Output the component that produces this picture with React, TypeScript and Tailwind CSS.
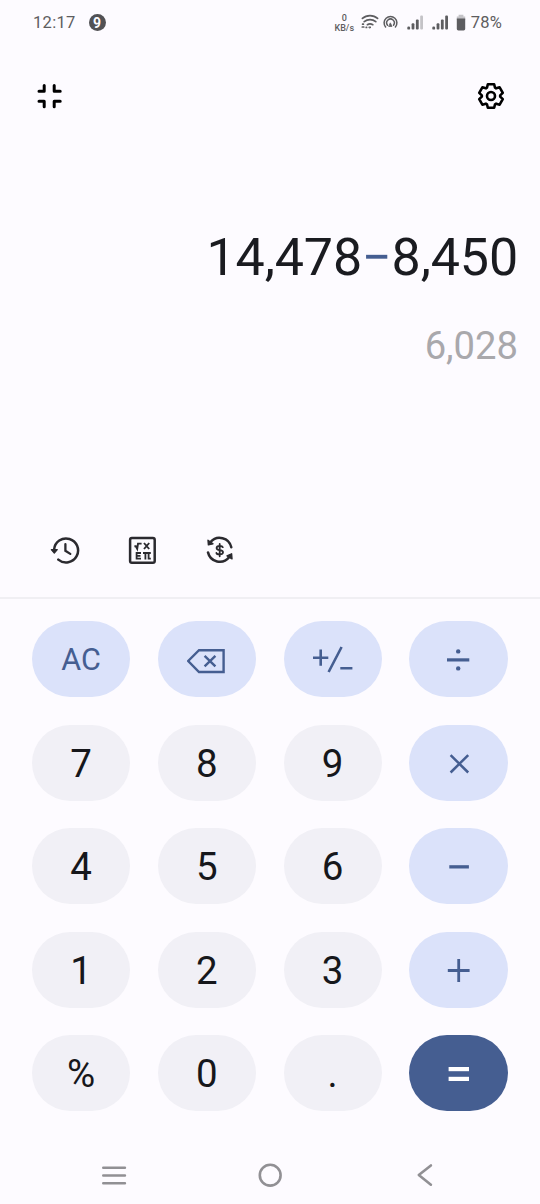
import React from "react";
import clsx from "clsx";

type Key = {
  id: string;
  label: React.ReactNode;
  kind: "digit" | "action" | "equals";
};

const BackspaceIcon = () => (
  <svg className="mt-[3px]" width="40" height="28" viewBox="0 0 40 28" fill="none" stroke="currentColor">
    <path d="M12 3.2H36.6V25H12L1.2 14Z" strokeWidth="2.4" />
    <path d="M17.6 8.8L28.4 19.4M28.4 8.8L17.6 19.4" strokeWidth="2.4" />
  </svg>
);

const SignIcon = () => (
  <svg className="mt-[2px]" width="40" height="28" viewBox="0 0 40 28" fill="none" stroke="currentColor" strokeWidth="2.6">
    <path d="M0 11.8H15.3M7.7 3.5V19.8M28.6 1L15.6 26M27.3 22.3H39.4" />
  </svg>
);

const DivideIcon = () => (
  <svg className="mt-px" width="28" height="28" viewBox="0 0 28 28" fill="currentColor">
    <rect x="2" y="12.3" width="22.3" height="3.2" />
    <circle cx="13.2" cy="5.4" r="2.2" />
    <circle cx="13.2" cy="22.4" r="2.2" />
  </svg>
);

const TimesIcon = () => (
  <svg width="28" height="28" viewBox="0 0 28 28" fill="none" stroke="currentColor" strokeWidth="2.5">
    <path d="M5.6 6.1L23.2 23.5M23.2 6.1L5.6 23.5" />
  </svg>
);

const MinusIcon = () => (
  <svg width="28" height="28" viewBox="0 0 28 28" fill="currentColor">
    <rect x="4.3" y="13.2" width="19.6" height="3.3" />
  </svg>
);

const PlusIcon = () => (
  <svg width="28" height="28" viewBox="0 0 28 28" fill="none" stroke="currentColor" strokeWidth="2.8">
    <path d="M2.8 14.5H24.6M13.7 3.1V25.9" />
  </svg>
);

const EqualsIcon = () => (
  <svg width="28" height="28" viewBox="0 0 28 28" fill="currentColor">
    <rect x="3.6" y="8" width="20.4" height="4.2" />
    <rect x="3.6" y="17.8" width="20.4" height="4.2" />
  </svg>
);

const keys: Key[] = [
  { id: "ac", label: <span className="pt-[3px] text-[30.5px]">AC</span>, kind: "action" },
  { id: "back", label: <BackspaceIcon />, kind: "action" },
  { id: "sign", label: <SignIcon />, kind: "action" },
  { id: "divide", label: <DivideIcon />, kind: "action" },
  { id: "7", label: "7", kind: "digit" },
  { id: "8", label: "8", kind: "digit" },
  { id: "9", label: "9", kind: "digit" },
  { id: "times", label: <TimesIcon />, kind: "action" },
  { id: "4", label: "4", kind: "digit" },
  { id: "5", label: "5", kind: "digit" },
  { id: "6", label: "6", kind: "digit" },
  { id: "minus", label: <MinusIcon />, kind: "action" },
  { id: "1", label: "1", kind: "digit" },
  { id: "2", label: "2", kind: "digit" },
  { id: "3", label: "3", kind: "digit" },
  { id: "plus", label: <PlusIcon />, kind: "action" },
  { id: "percent", label: "%", kind: "digit" },
  { id: "0", label: "0", kind: "digit" },
  { id: "dot", label: ".", kind: "digit" },
  { id: "equals", label: <EqualsIcon />, kind: "equals" },
];

const Signal = ({ weak }: { weak?: boolean }) => (
  <svg width="17" height="16" viewBox="0 0 17 16" fill="#5d5d60">
    <rect x="0.3" y="11.6" width="2.8" height="3" rx="1.2" />
    <rect x="4.6" y="8.2" width="2.8" height="6.4" rx="1" />
    <rect x="8.9" y="4.6" width="2.8" height="10" rx="1" />
    <rect x="13.2" y="0.6" width="2.8" height="14" rx="1" fill={weak ? "#c4c3c7" : "#5d5d60"} />
  </svg>
);

const StatusBar = () => (
  <div className="flex h-[46px] items-center pl-[33px] pr-[38px] text-[#5d5d60]">
    <span className="text-[16.5px] tracking-[0.3px]">12:17</span>
    <span className="mb-px ml-[13px] flex size-[17px] items-center justify-center rounded-full bg-[#515154] text-[14px] font-bold leading-none text-[#fdfbff]">
      9
    </span>
    <div className="ml-auto flex items-center">
      <div className="flex w-[21px] flex-col items-center text-[9px] font-medium leading-[10px]">
        <span>0</span>
        <span>KB/s</span>
      </div>
      <svg className="mb-[2px] ml-[6px]" width="18" height="16" viewBox="0 0 18 16" fill="none" stroke="#5d5d60" strokeWidth="1.7" strokeLinecap="round">
        <path d="M1.4 4.4C5.6 0.6 12.4 0.6 16.6 4.4M3.2 7.7C6.6 4.9 11.4 4.9 14.8 7.7M6.4 10.7C8 9.6 10 9.6 11.8 10.7" />
        <path d="M8.1 13H9.9L9 14Z" fill="#5d5d60" strokeWidth="1" strokeLinejoin="round" />
        <path d="M1.6 10.2H2.4M1.3 13H2.8M5.2 13.4H5.6" strokeWidth="1.7" />
      </svg>
      <svg className="mb-[2px] ml-[4px]" width="15" height="16" viewBox="0 0 15 16" fill="none" stroke="#5d5d60" strokeWidth="1.5" strokeLinecap="round">
        <path d="M2.6 13A6.4 6.4 0 1 1 12.4 13" />
        <path d="M4.5 11.2A3.8 3.8 0 1 1 10.5 11.2" />
        <path d="M7.5 9.2L9 12.4H6Z" fill="#5d5d60" strokeWidth="0.8" strokeLinejoin="round" />
      </svg>
      <div className="ml-[9px] flex">
        <Signal weak />
      </div>
      <div className="ml-[8px] flex">
        <Signal />
      </div>
      <svg className="mb-[2px] ml-[7px]" width="10" height="17" viewBox="0 0 10 17">
        <path d="M2.6 0.8H7.4V2.6H9.2V6H0.8V2.6H2.6Z" fill="#c4c3c7" />
        <path d="M0.8 4.5H9.2V15Q9.2 16.4 7.7 16.4H2.3Q0.8 16.4 0.8 15Z" fill="#5d5d60" />
      </svg>
      <span className="ml-[5px] text-[16.5px] tracking-[0.2px]">78%</span>
    </div>
  </div>
);

const TopBar = () => (
  <div className="flex h-[100px] items-center justify-between pl-[36px] pr-[35.5px] text-black">
    <svg width="27" height="27" viewBox="0 0 27 27" fill="none" stroke="currentColor" strokeWidth="3" strokeLinejoin="round" strokeLinecap="round">
      <path d="M8.2 2.6V8.2H3M18.2 2.6V8.2H24.2M8.2 23.8V18.2H3M18.2 23.8V18.2H24.2" />
    </svg>
    <svg width="28" height="28" viewBox="0 0 28 28" fill="none" stroke="currentColor" strokeWidth="2.6" strokeLinejoin="round">
      <path d="M10.84 2.22H17.16L18.03 5.73L19.14 6.37L22.63 5.37L25.78 10.84L23.18 13.36V14.64L25.78 17.16L22.63 22.63L19.14 21.63L18.03 22.27L17.16 25.78H10.84L9.97 22.27L8.86 21.63L5.37 22.63L2.22 17.16L4.82 14.64V13.36L2.22 10.84L5.37 5.37L8.86 6.37L9.97 5.73Z" />
      <circle cx="14" cy="14" r="4" />
    </svg>
  </div>
);

const Display = () => (
  <div className="flex h-[377px] flex-col items-end pr-[22px] pt-[82px]">
    <p className="text-[52px] leading-[60px] tracking-[-0.15px] text-[#1a1b20]">
      14,478<span className="text-[#455e91]">−</span>8,450
    </p>
    <p className="mt-[36px] text-[38.2px] leading-[44px] text-[#a9a8ac]">6,028</p>
  </div>
);

const Tools = () => (
  <div className="flex h-[76px] items-start gap-[47px] border-b-2 border-[#f0eff3] pl-[50px] pt-[12px] text-[#2b2a2f]">
    <svg width="30" height="30" viewBox="0 0 30 30" fill="none" stroke="currentColor" strokeWidth="2.5" strokeLinecap="round">
      <path d="M4.1 14.5A12 12 0 1 1 8.3 24.6" />
      <path d="M1.3 14.7H7.3L4.3 18.2Z" fill="currentColor" strokeWidth="1.2" strokeLinejoin="round" />
      <path d="M15.4 9.2V15.8L20.3 18.9" strokeWidth="2.3" />
    </svg>
    <svg width="30" height="30" viewBox="0 0 30 30" fill="none" stroke="currentColor" strokeWidth="2">
      <rect x="3.1" y="3.1" width="24.6" height="24.6" rx="1.8" strokeWidth="2.5" />
      <path d="M7.4 11.2H8.8L10.2 13.8L11 8.6H14.6M17 8L22.2 14M22.2 8L17 14" strokeWidth="1.9" />
      <path d="M14 18H9.6V23.7H14M9.6 20.8H13.5M16 18H23.8M18.4 18V24.6M21.6 18V23.7H23.8" strokeWidth="1.8" />
    </svg>
    <svg className="mt-px" width="30" height="30" viewBox="0 0 30 30" fill="none" stroke="currentColor" strokeWidth="2.5" strokeLinecap="round">
      <path d="M6.5 6A12 12 0 0 1 27.3 11.2M4 16.4A12 12 0 0 0 25.1 21.2" />
      <path d="M4 4.2L4.4 8.9L9 7.7ZM28 22.8L27.6 17.8L23 19.8Z" fill="currentColor" strokeWidth="1.4" strokeLinejoin="round" />
      <path d="M18.8 11.2Q18.4 10 15.7 10Q12.6 10 12.6 12.1Q12.6 14 15.7 14.1Q19 14.3 19 16.3Q19 18.4 15.8 18.4Q12.8 18.4 12.4 16.9M15.7 8V20.3" strokeWidth="1.8" />
    </svg>
  </div>
);

const Keypad = () => (
  <div className="grid grid-cols-[98px_98px_98px_99px] gap-x-[27.8px] gap-y-[27.5px] pl-[32px] pt-[22px]">
    {keys.map(({ id, label, kind }) => (
      <button
        key={id}
        className={clsx(
          "flex h-[76px] items-center justify-center rounded-full text-[38.5px] leading-none",
          kind === "digit" && "bg-[#f1f0f6] pt-[3px] text-[#16171b]",
          kind === "action" && "bg-[#dbe2fa] text-[#455e91]",
          kind === "equals" && "bg-[#455e91] text-white"
        )}
      >
        {label}
      </button>
    ))}
  </div>
);

const NavBar = () => (
  <div className="flex items-center pl-[101px] pt-[51px] text-[#919094]">
    <svg width="26" height="26" viewBox="0 0 26 26" fill="none" stroke="currentColor" strokeWidth="2.6" strokeLinecap="round">
      <path d="M2.3 5.7H23.9M2.3 13.5H23.9M2.3 21.2H23.9" />
    </svg>
    <svg className="ml-[130px]" width="26" height="26" viewBox="0 0 26 26" fill="none" stroke="currentColor" strokeWidth="2.6">
      <circle cx="13.2" cy="13.2" r="10.4" />
    </svg>
    <svg className="ml-[129px]" width="26" height="26" viewBox="0 0 26 26" fill="none" stroke="currentColor" strokeWidth="2.6" strokeLinecap="round" strokeLinejoin="round">
      <path d="M18.9 3.4L6.8 13L18.9 22.7" />
    </svg>
  </div>
);

const App = () => {
  return (
    <div className="flex h-[1204px] w-[540px] flex-col overflow-hidden bg-[#fdfbff] font-['Roboto',sans-serif]">
      <StatusBar />
      <TopBar />
      <Display />
      <Tools />
      <Keypad />
      <NavBar />
    </div>
  );
};

export default App;
